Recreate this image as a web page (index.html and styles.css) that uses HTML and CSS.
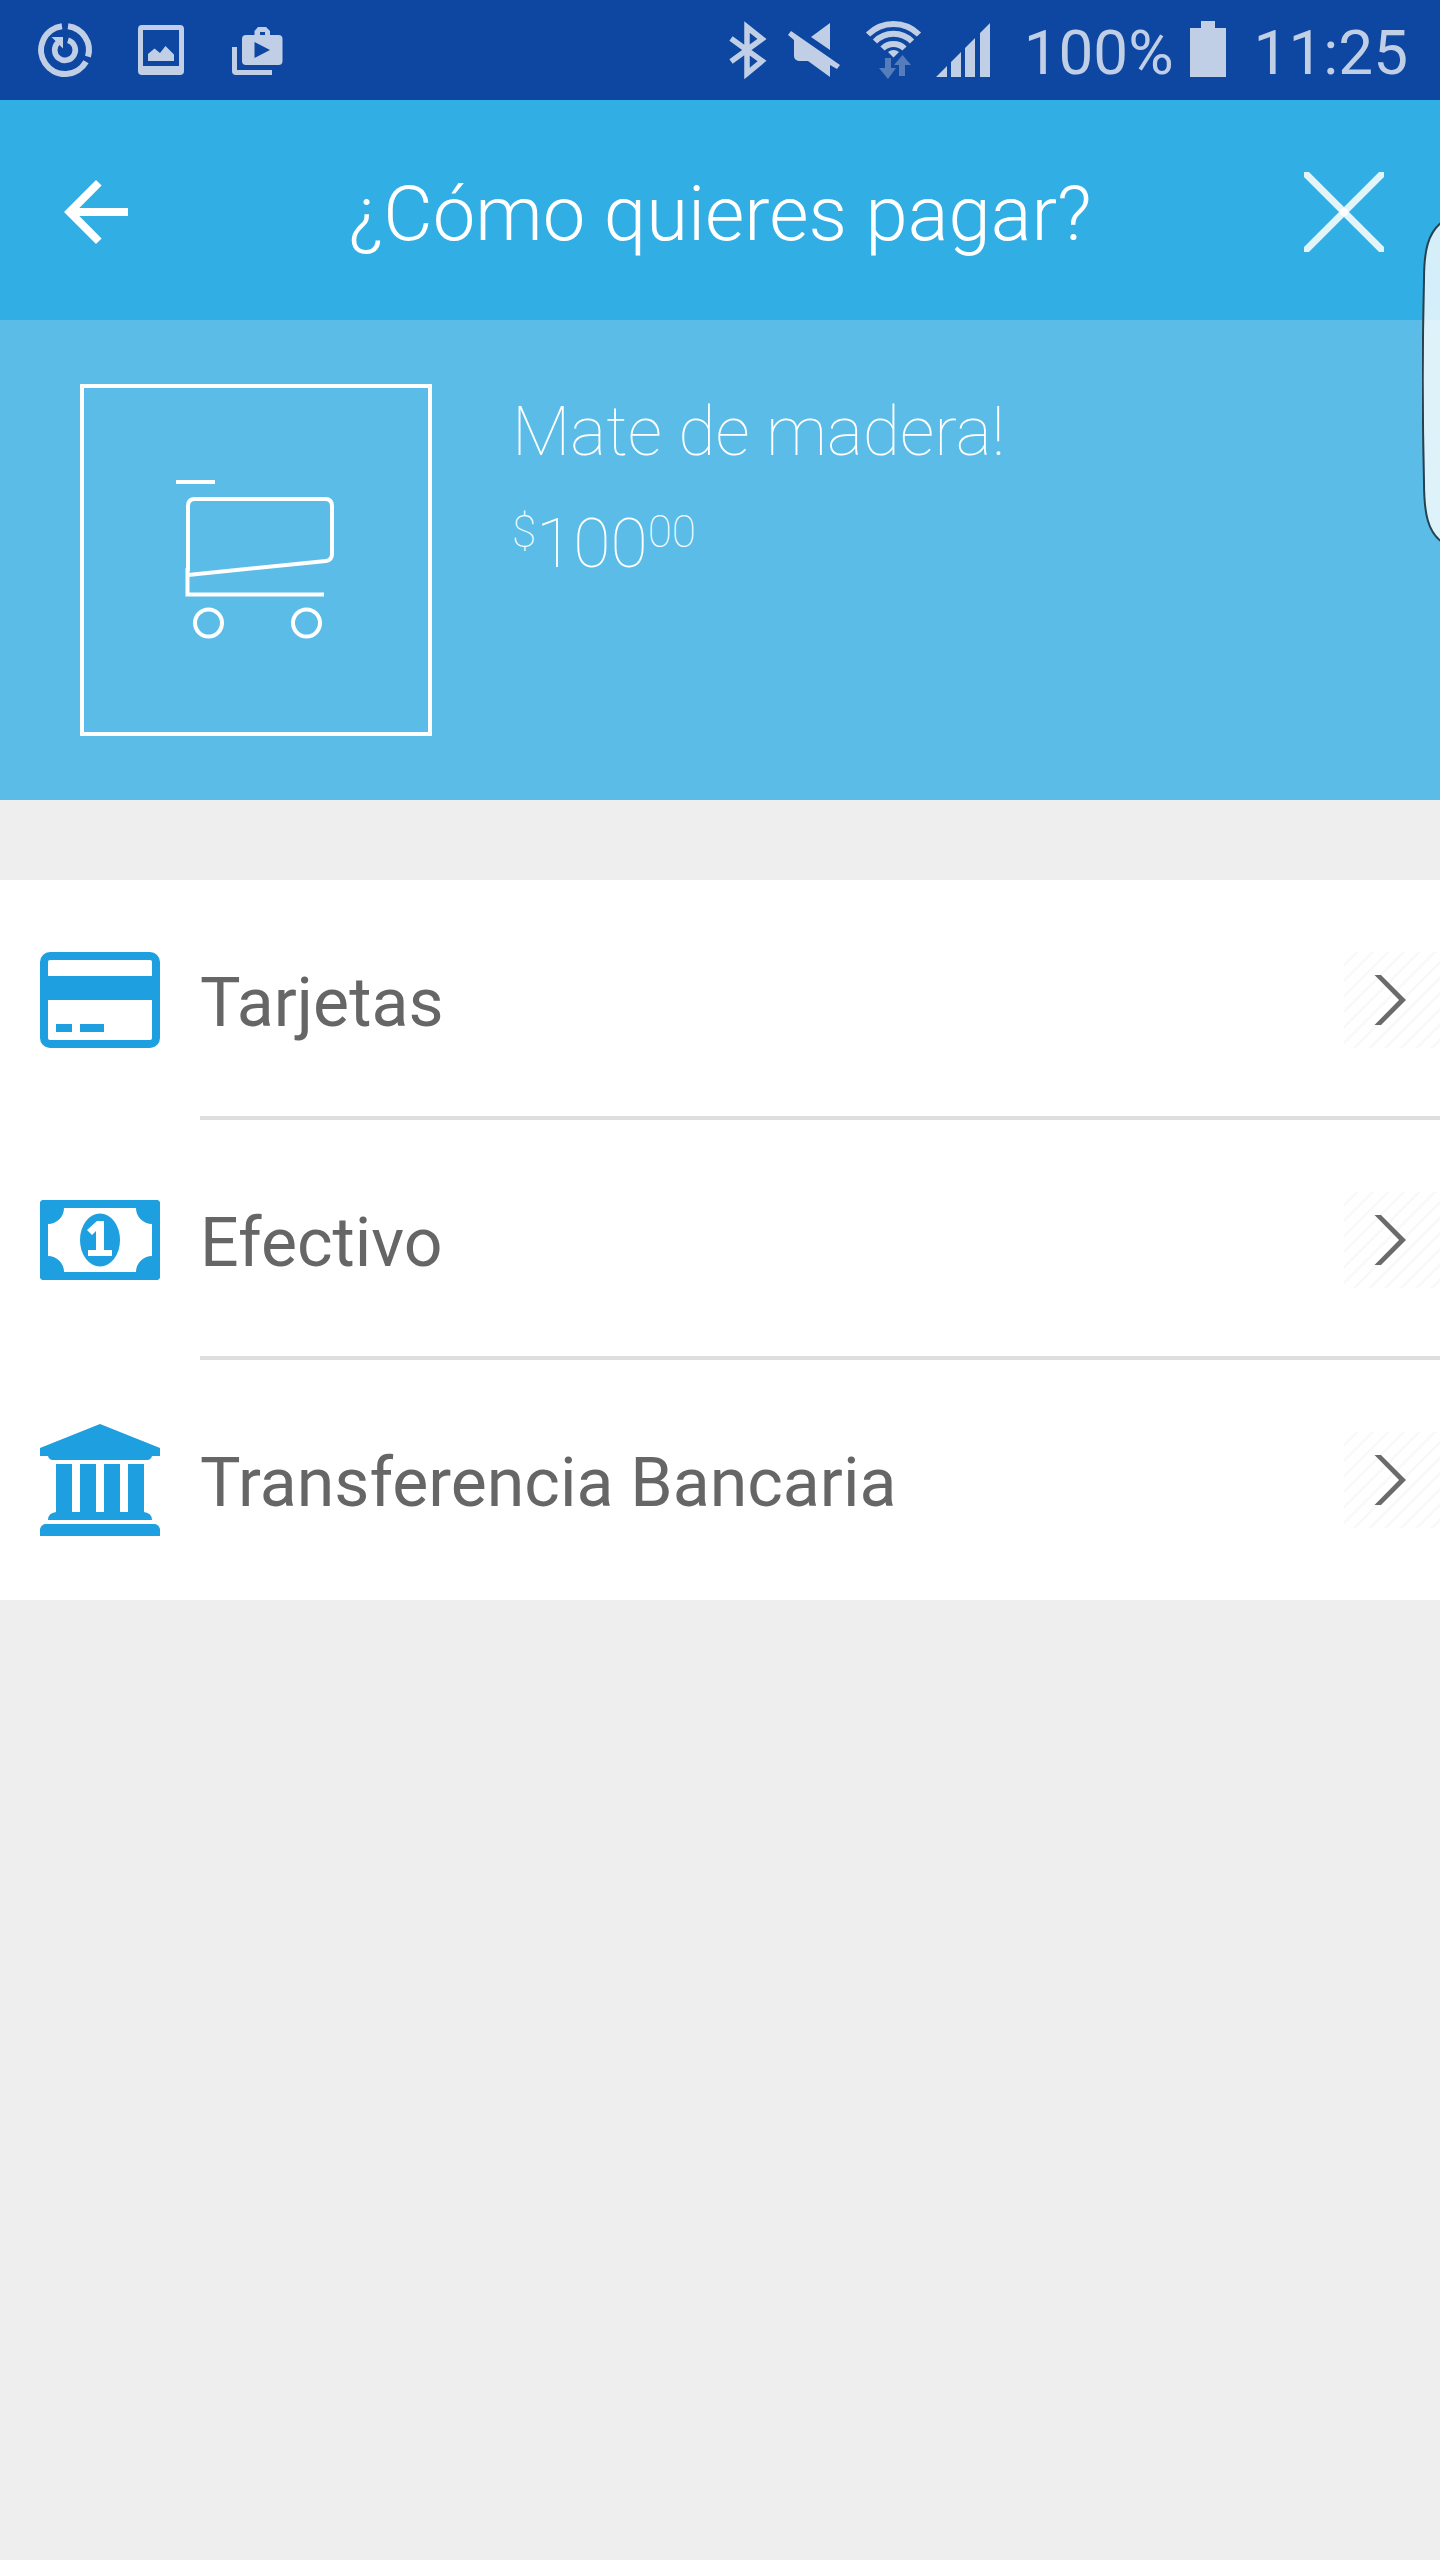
FILE: index.html
```html
<!DOCTYPE html>
<html lang="es">
<head>
<meta charset="utf-8">
<meta name="viewport" content="width=device-width, initial-scale=1">
<title>¿Cómo quieres pagar?</title>
<link rel="stylesheet" href="styles.css">
</head>
<body>
<div class="status">
  <div class="status-left">
    <svg width="56" height="56" viewBox="0 0 56 56" aria-hidden="true">
      <g fill="none" stroke="currentColor" stroke-width="6">
        <path d="M32 4.2A24 24 0 0 1 52 34.6M50 39.8A24 24 0 1 1 26 4.2"/>
        <path d="M32 18.2A10.3 10.3 0 1 1 22 20.5" stroke-width="5.6"/>
      </g>
      <path d="M15.5 15H27V26.5L23.5 23 20 19.5Z" fill="currentColor"/>
    </svg>
    <svg width="56" height="56" viewBox="0 0 56 56" fill="currentColor" aria-hidden="true">
      <path fill-rule="evenodd" d="M10 3H48a4 4 0 0 1 4 4V49a4 4 0 0 1-4 4H10a4 4 0 0 1-4-4V7a4 4 0 0 1 4-4ZM11 8V44H47V8Z"/>
      <path d="M16 39V32L22.500 26.500 28 31 33.500 24 42 32.500V39Z"/>
    </svg>
    <svg width="56" height="56" viewBox="0 0 56 56" fill="currentColor" aria-hidden="true">
      <path fill-rule="evenodd" d="M18 13H26.500V9L30 5H38L42 9V13H50.500a4 4 0 0 1 4 4V39a4 4 0 0 1-4 4H18a4 4 0 0 1-4-4V17a4 4 0 0 1 4-4ZM32 10V13H37V10ZM26.500 20V36L42 28Z"/>
      <path d="M4 25H9V48H44V53H8a4 4 0 0 1-4-4Z"/>
    </svg>
  </div>
  <div class="status-right">
    <svg width="40" height="56" viewBox="0 0 40 56" aria-hidden="true">
      <path d="M3 16.500 34 39 19 51.500V5L34 17 3 39.500" fill="none" stroke="currentColor" stroke-width="5.500"/>
    </svg>
    <svg width="64" height="56" viewBox="0 0 64 56" fill="currentColor" aria-hidden="true">
      <path d="M46 1V28L27 15Z"/>
      <path d="M7 9 56 43 53 47 46 43V55L24 39H15a5 5 0 0 1-5-5V18L4 13Z"/>
    </svg>
    <svg width="56" height="56" viewBox="0 0 56 56" aria-hidden="true">
      <g fill="none" stroke="currentColor" stroke-width="6">
        <path d="M4 12.500A36 36 0 0 1 55 12.500"/>
        <path d="M11 19.500A26 26 0 0 1 48 19.500"/>
        <path d="M18.500 26.500A15.500 15.500 0 0 1 40.500 26.500"/>
      </g>
      <path d="M24 30Q29.500 26 35 30L29.500 35.500Z" fill="currentColor"/>
      <path d="M21 36H27V46H32L24 57 15 46H21ZM35 54V43H30L38.500 33 47 43H41V54Z" fill="currentColor" opacity=".4"/>
    </svg>
    <svg width="56" height="56" viewBox="0 0 56 56" fill="currentColor" aria-hidden="true">
      <path d="M0 55 11 44V55ZM15 55V40L25 30V55ZM29 55V26L39 16V55ZM44 55V11L54 1V55Z"/>
    </svg>
    <span class="status-text battery-level">100%</span>
    <svg width="36" height="56" viewBox="0 0 36 56" fill="currentColor" aria-hidden="true">
      <path d="M11 -1H25V6H36V55H0V6H11Z"/>
    </svg>
    <span class="status-text clock">11:25</span>
  </div>
</div>

<header class="bar">
  <button class="icon-button back" type="button" aria-label="Volver">
    <svg width="64" height="64" viewBox="0 0 64 64" fill="#fff" aria-hidden="true">
      <path d="M64 28H15.300L37.600 5.600 32 0 0 32 32 64 37.600 58.400 15.300 36H64Z"/>
    </svg>
  </button>
  <h1 class="bar-title">¿Cómo quieres pagar?</h1>
  <button class="icon-button close" type="button" aria-label="Cerrar">
    <svg width="80" height="80" viewBox="0 0 80 80" aria-hidden="true">
      <path d="M0 0 80 80M80 0 0 80" stroke="#e4f4fb" stroke-width="7"/>
      <circle cx="40" cy="40" r="4" fill="#fff"/>
    </svg>
  </button>
</header>

<section class="product">
  <div class="product-picture">
    <svg width="344" height="344" viewBox="0 0 344 344" fill="none" stroke="#fff" stroke-width="4" aria-hidden="true">
      <path d="M92 94H131M104 183V118Q104 111 111 111H241Q248 111 248 118V166Q248 172 242 173L104 187M103.500 180V206.500H240"/>
      <circle cx="124.500" cy="235" r="13.500"/>
      <circle cx="222.500" cy="235" r="13.500"/>
    </svg>
  </div>
  <div class="product-info">
    <h2 class="product-name">Mate de madera!</h2>
    <p class="product-price"><span class="small">$</span>100<span class="small">00</span></p>
  </div>
</section>

<main>
  <ul class="methods">
    <li>
      <a class="method" href="#tarjetas">
        <svg width="120" height="96" viewBox="0 0 120 96" fill="#1e9fdf" aria-hidden="true">
          <path fill-rule="evenodd" d="M10 0H110a10 10 0 0 1 10 10V86a10 10 0 0 1-10 10H10a10 10 0 0 1-10-10V10A10 10 0 0 1 10 0ZM10 8Q8 8 8 10V24H112V10Q112 8 110 8ZM8 48V86Q8 88 10 88H110Q112 88 112 86V48Z"/>
          <path d="M16 72H32V80H16ZM40 72H64V80H40Z"/>
        </svg>
        <span class="method-body">
          <span class="method-label">Tarjetas</span>
          <svg class="chevron" width="96" height="96" viewBox="0 0 96 96" fill="#6b6b6b" aria-hidden="true"><path d="M30.500 23H37L62 48 37 73H30.500L55 48Z"/></svg>
        </span>
      </a>
    </li>
    <li>
      <a class="method" href="#efectivo">
        <svg width="120" height="80" viewBox="0 0 120 80" fill="#1e9fdf" aria-hidden="true">
          <path fill-rule="evenodd" d="M2 0H118L120 2V78L118 80H2L0 78V2ZM24 8A16 16 0 0 1 8 24V56A16 16 0 0 1 24 72H96A16 16 0 0 1 112 56V24A16 16 0 0 1 96 8Z"/>
          <ellipse cx="60" cy="40" rx="20" ry="26.500"/>
          <path d="M57 21H64V50H72V56H48V50H56V31L52 35 47 30Z" fill="#fff"/>
        </svg>
        <span class="method-body">
          <span class="method-label">Efectivo</span>
          <svg class="chevron" width="96" height="96" viewBox="0 0 96 96" fill="#6b6b6b" aria-hidden="true"><path d="M30.500 23H37L62 48 37 73H30.500L55 48Z"/></svg>
        </span>
      </a>
    </li>
    <li>
      <a class="method" href="#transferencia">
        <svg width="120" height="112" viewBox="0 0 120 112" fill="#1e9fdf" aria-hidden="true">
          <path d="M60 0 120 24V32H112Q111 36 107 36H13Q9 36 8 32H0V24ZM16 40H32V88H40V40H56V88H64V40H80V88H88V40H104V88Q112 89 112 96H8Q8 89 16 88ZM5 100H115Q119 101 120 105V112H0V105Q1 101 5 100Z"/>
        </svg>
        <span class="method-body">
          <span class="method-label">Transferencia Bancaria</span>
          <svg class="chevron" width="96" height="96" viewBox="0 0 96 96" fill="#6b6b6b" aria-hidden="true"><path d="M30.500 23H37L62 48 37 73H30.500L55 48Z"/></svg>
        </span>
      </a>
    </li>
  </ul>
</main>

<svg class="edge-handle" width="18" height="324" viewBox="0 0 18 324" aria-hidden="true">
  <path d="M20 2C6 13 2 30 2 60C0.500 120 0.500 200 2 262C2 294 6 312 20 322Z" fill="#fff" fill-opacity=".8" stroke="#27424f" stroke-width="2"/>
</svg>
</body>
</html>
```
FILE: styles.css
```css
* {
  box-sizing: border-box;
}

body {
  position: relative;
  margin: 0;
  min-height: 100vh;
  background: #eee;
  font-family: Roboto, "Noto Sans", sans-serif;
  overflow-x: hidden;
}

svg {
  display: block;
  flex: none;
}

h1,
h2,
p,
ul {
  margin: 0;
  padding: 0;
}

/* Status bar */
.status {
  display: flex;
  justify-content: space-between;
  align-items: center;
  height: 100px;
  padding: 0 32px 0 36px;
  background: #0e47a1;
  color: #c0cfe6;
}

.status svg {
  overflow: visible;
}

.status-left {
  display: flex;
  gap: 40px;
}

.status-right {
  display: flex;
  align-items: center;
  gap: 16px;
}

.status-text {
  padding-top: 6px;
  font-size: 62px;
  line-height: 80px;
}

.battery-level {
  margin-left: 16px;
}

.clock {
  margin-left: 12px;
}

/* Title bar */
.bar {
  display: grid;
  grid-template-columns: 1fr auto 1fr;
  align-items: center;
  height: 220px;
  padding: 4px 56px 0;
  background: #31aee3;
}

.icon-button {
  padding: 0;
  border: 0;
  background: none;
  cursor: pointer;
}

.back {
  justify-self: start;
  margin-left: 8px;
}

.close {
  justify-self: end;
}

.bar-title {
  padding-top: 4px;
  color: #fff;
  font-size: 76px;
  font-weight: 300;
  line-height: 96px;
}

/* Product summary */
.product {
  display: flex;
  gap: 80px;
  padding: 64px 80px;
  background: #5bbde7;
  color: #fff;
}

.product-picture {
  border: 4px solid #fff;
}

.product-info {
  padding-top: 2px;
  font-size: 68px;
  font-weight: 100;
}

.product-name {
  font-size: 68px;
  font-weight: 100;
  line-height: 92px;
}

.product-price {
  padding-top: 20px;
  line-height: 92px;
}

.small {
  font-size: 44px;
  line-height: 44px;
  vertical-align: 20px;
}

/* Payment methods */
.methods {
  margin-top: 80px;
  background: #fff;
  list-style: none;
}

.method {
  display: grid;
  grid-template-columns: 120px 1fr;
  align-items: center;
  gap: 40px;
  height: 240px;
  padding-left: 40px;
  color: #666;
  text-decoration: none;
}

.method-body {
  display: flex;
  align-items: center;
  justify-content: space-between;
  height: 100%;
}

li:not(:last-child) .method-body {
  box-shadow: inset 0 -4px #dedede;
}

.method-label {
  padding-top: 6px;
  font-size: 68px;
  line-height: 80px;
}

.chevron {
  background: repeating-linear-gradient(135deg, #fff 0 7px, #f8f8f8 9px 10px, #fff 11px);
}

/* Edge panel handle floating over the screen */
.edge-handle {
  position: absolute;
  top: 220px;
  right: 0;
}
```
